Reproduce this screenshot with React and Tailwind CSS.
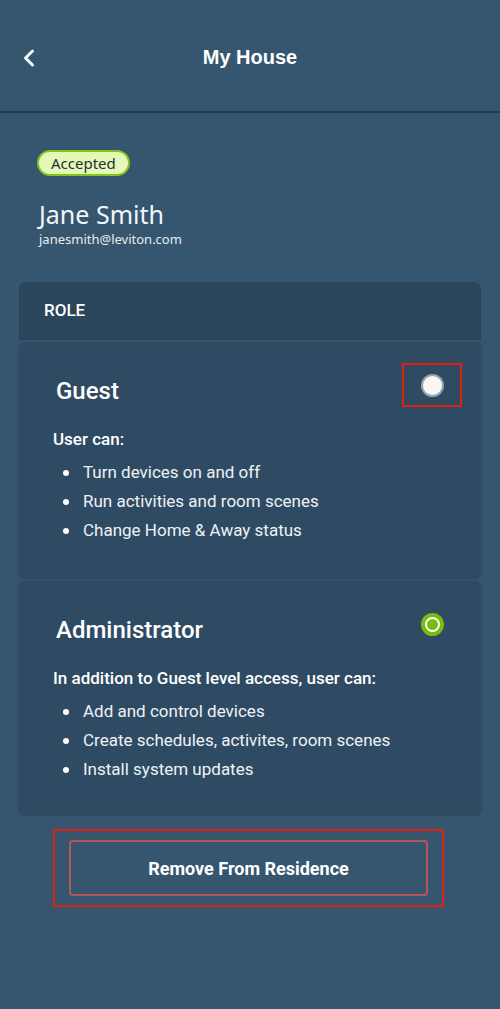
import { ChevronLeft } from "lucide-react";

const guestPerms = [
  "Turn devices on and off",
  "Run activities and room scenes",
  "Change Home & Away status",
];

const adminPerms = [
  "Add and control devices",
  "Create schedules, activites, room scenes",
  "Install system updates",
];

function RoleCard({ title, intro, perms, selected, highlight, className }) {
  return (
    <div
      className={`bg-[#2f4b63] rounded-md shadow-[0_1px_3px_rgba(0,0,0,0.25)] pl-[37px] pr-[19px] ${className}`}
    >
      <div className="flex items-start justify-between">
        <h2 className="mt-[36px] text-[24px] leading-[26px] text-white font-['Roboto'] font-medium">
          {title}
        </h2>
        <div
          className={`mt-[21px] w-[60px] h-[44px] flex items-center justify-center ${
            highlight ? "border-2 border-[#e3200f]" : ""
          }`}
        >
          {selected ? (
            <span className="w-[23px] h-[23px] rounded-full bg-[#7cbb0d] flex items-center justify-center">
              <span className="w-[15px] h-[15px] rounded-full border-2 border-white" />
            </span>
          ) : (
            <span className="w-[23px] h-[23px] rounded-full bg-[#f7f7f7] border-2 border-[#9aa3aa]" />
          )}
        </div>
      </div>
      <p className="mt-[21px] -ml-[3px] text-[17px] leading-[22px] font-medium text-white">{intro}</p>
      <ul className="mt-[8px] ml-[7px]">
        {perms.map((p) => (
          <li key={p} className="flex items-center h-[29px] text-[17px] text-[#eef2f5]">
            <span className="w-[6px] h-[6px] rounded-full bg-white mr-[14px]" />
            {p}
          </li>
        ))}
      </ul>
    </div>
  );
}

export default function App() {
  return (
    <div className="w-[500px] min-h-[1009px] bg-[#36566f] font-['Roboto',sans-serif] text-white">
      <header className="h-[113px] flex items-center relative border-b-2 border-[#243a4c]">
        <ChevronLeft className="absolute left-[15px] top-[44px] w-[28px] h-[28px]" strokeWidth={2.5} />
        <h1 className="w-full text-center text-[20px] font-semibold font-['Liberation_Sans',sans-serif] mt-[3px]">
          My House
        </h1>
      </header>

      <div className="px-[37px] pt-[37px]">
        <span className="inline-flex items-center h-[26px] px-[12px] rounded-full bg-[#e5f8b8] border-2 border-[#86c31a] text-[#22303a] text-[15px] font-['Noto_Sans',sans-serif]">
          Accepted
        </span>
        <div className="mt-[23px] ml-[2px] text-[25px] leading-[30px] font-['Noto_Sans',sans-serif] text-[#f3f6f8]">
          Jane Smith
        </div>
        <div className="mt-[1px] ml-[2px] text-[13px] leading-[18px] font-['Noto_Sans',sans-serif] text-[#e6ecf0]">
          janesmith@leviton.com
        </div>
      </div>

      <div className="mx-[19px] mt-[34px]">
        <div className="h-[58px] bg-[#2b465b] rounded-t-md flex items-center px-[25px] text-[17px] font-medium">
          ROLE
        </div>
        <RoleCard
          title="Guest"
          intro="User can:"
          perms={guestPerms}
          selected={false}
          highlight
          className="mt-[2px] h-[235px]"
        />
        <RoleCard
          title="Administrator"
          intro="In addition to Guest level access, user can:"
          perms={adminPerms}
          selected
          className="mt-[4px] h-[233px]"
        />
      </div>

      <div className="ml-[53px] mr-[56px] mt-[15px] border-2 border-[#e3200f] px-[14px] py-[9px]">
        <button className="w-full h-[56px] rounded-[4px] border-2 border-[#b4575d] text-[18px] font-bold text-white">
          Remove From Residence
        </button>
      </div>
    </div>
  );
}
